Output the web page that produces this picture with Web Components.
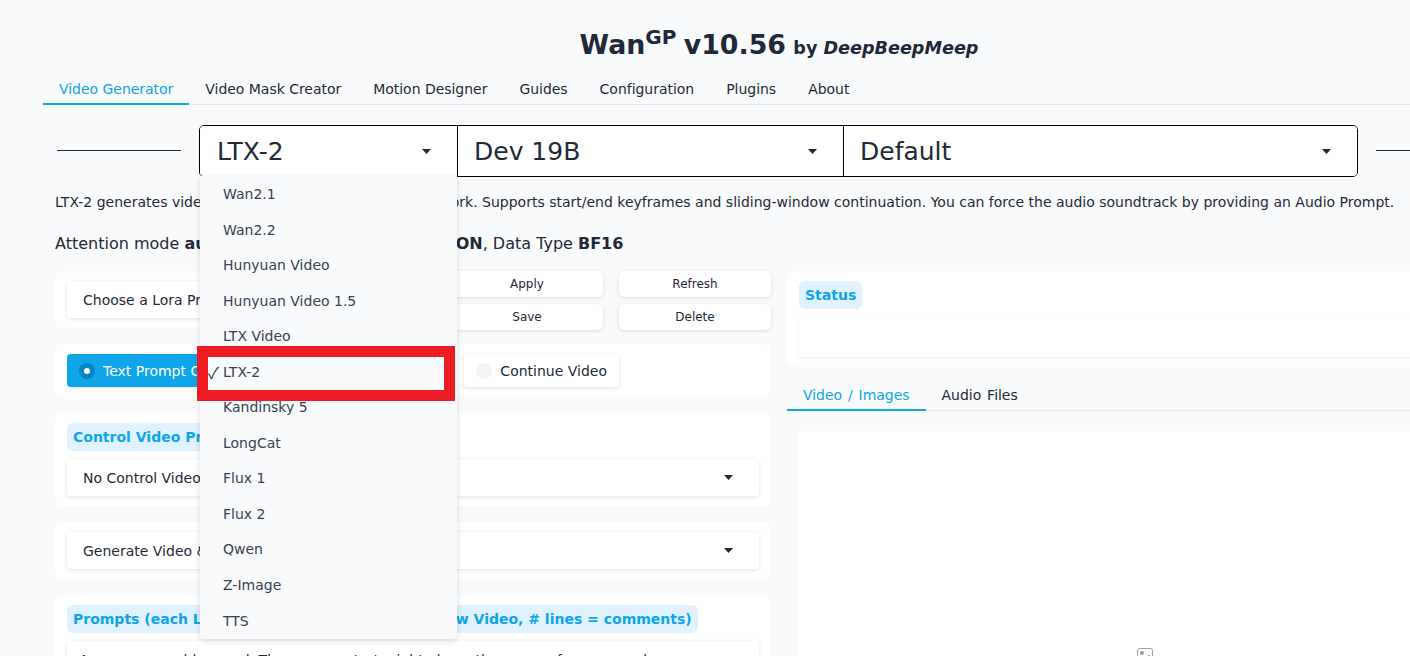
<!DOCTYPE html>
<html>
<head>
<meta charset="utf-8">
<title>WanGP</title>
<style>
  html, body { margin: 0; height: 656px; overflow: hidden; background: #f9fafb; }
  body { font-family: "DejaVu Sans", sans-serif; color: #1f2937; font-size: 14px; }
</style>
</head>
<body>
<wan-app></wan-app>
<script>
function el(name, css, html) {
  customElements.define(name, class extends HTMLElement {
    constructor() {
      super();
      this.attachShadow({ mode: 'open' });
      const body = typeof html === 'function' ? html(this) : html;
      this.shadowRoot.innerHTML = `<style>${css}</style>${body}`;
    }
  });
}

const arrow = `<svg width="9" height="5" viewBox="0 0 9 5"><path d="M0 0h9L4.5 5z" fill="currentColor"/></svg>`;

el('wan-title', `
  :host { display: block; height: 74px; box-sizing: border-box; padding-top: 26px; text-align: center; color: #1f2937; font-weight: 700; font-size: 26.8px; word-spacing: -2px; line-height: 38px; white-space: nowrap; }
  sup { font-size: 20px; line-height: 0; vertical-align: baseline; position: relative; top: -10px; }
  small { font-size: 17.6px; word-spacing: 0; }
`, `Wan<sup>GP</sup> v10.56 <small>by <i>DeepBeepMeep</i></small>`);

el('wan-tabs', `
  :host { display: flex; height: 30px; border-bottom: 1px solid #e5e7eb; font-size: 14px; letter-spacing: -0.03px; color: #1f2937; }
  span { padding: 0 16px; line-height: 30px; height: 29px; box-sizing: border-box; white-space: nowrap; }
  span.on { color: #0ea5e9; border-bottom: 2px solid #0ea5e9; height: 31px; }
`, me => me.getAttribute('items').split('|').map((t, i) => `<span class="${i ? '' : 'on'}">${t}</span>`).join(''));

el('wan-rule', `
  :host { display: block; height: 1px; background: #1f2937; flex: none; width: 124px; }
`, '');

el('wan-segment', `
  :host { display: flex; align-items: center; justify-content: space-between; box-sizing: border-box; height: 100%; padding: 0 26px 0 16px; font-size: 25px; color: #1f2937; position: relative; background: #fff; }
  :host(:not(:last-child)) { border-right: 1px solid #000; }
  :host(:first-child) { border-radius: 4px 0 0 4px; padding-left: 17px; }
  :host(:last-child) { border-radius: 0 4px 4px 0; }
  svg { color: #1f2937; flex: none; }
`, `<slot></slot>${arrow}<slot name="over"></slot>`);

el('wan-models', `
  :host { display: flex; align-items: center; height: 52px; margin: 20px 0 0 14px; }
  .box { display: grid; grid-template-columns: 258px 386px 1fr; width: 1159px; height: 52px; box-sizing: border-box; border: 1px solid #000; border-radius: 5px; margin: 0 18px; }
  wan-rule { position: relative; top: -1px; }
`, `<wan-rule></wan-rule><div class="box"><slot></slot></div><wan-rule></wan-rule>`);

el('wan-menu', `
  :host { position: absolute; left: 0; top: 50px; width: 257px; padding-top: 1px; background: #f9fafb; box-shadow: 0 2px 6px rgba(0,0,0,.14); border-radius: 0 0 4px 4px; z-index: 5; font-size: 14px; color: #374151; }
  div { height: 35.55px; line-height: 35.55px; padding-left: 23px; position: relative; white-space: nowrap; }
  b { position: absolute; left: 8px; font-weight: 400; font-size: 16px; font-family: "Noto Sans CJK JP", "DejaVu Sans", sans-serif; }
  i { position: absolute; left: -3px; right: 2px; top: -9px; bottom: -11px; border: 11px solid #ed1c24; pointer-events: none; }
`, me => me.getAttribute('items').split('|').map(t =>
    t === me.getAttribute('selected') ? `<div><b>✓</b>${t}<i></i></div>` : `<div>${t}</div>`).join(''));

el('wan-card', `
  :host { display: block; background: #fff; border-radius: 8px; padding: 10px 12px; box-sizing: border-box; }
`, `<slot></slot>`);

el('wan-chip', `
  :host { display: table; background: #e0f2fe; color: #0ea5e9; font-weight: 700; font-size: 14px; line-height: 28px; padding: 0 6px; border-radius: 6px; margin-bottom: 8px; white-space: nowrap; }
`, `<slot></slot>`);

el('wan-field', `
  :host { display: flex; align-items: center; justify-content: space-between; height: 37px; box-sizing: border-box; padding: 0 26px 0 16px; background: #fff; border-radius: 4px; box-shadow: 0 1px 4px rgba(0,0,0,.12); font-size: 14px; white-space: nowrap; }
  svg { flex: none; }
`, `<slot></slot>${arrow}`);

el('wan-prompt', `
  :host { display: block; height: 110px; box-sizing: border-box; padding: 9px 12px; background: #fff; border-radius: 4px; box-shadow: 0 1px 4px rgba(0,0,0,.12); font-size: 14px; line-height: 20px; }
`, `<slot></slot>`);

el('wan-btn', `
  :host { display: block; height: 26px; line-height: 26px; text-align: center; background: #fff; border-radius: 6px; box-shadow: 0 1px 4px rgba(0,0,0,.12); font-size: 12px; color: #1f2937; }
`, `<slot></slot>`);

el('wan-radio', `
  :host { display: flex; align-items: center; gap: 8px; height: 33px; box-sizing: border-box; padding: 0 12px; background: #fff; border-radius: 4px; box-shadow: 0 1px 4px rgba(0,0,0,.12); font-size: 14px; white-space: nowrap; }
  :host([on]) { background: #0ea5e9; color: #fff; }
  u { width: 16px; height: 16px; border-radius: 50%; background: #f3f4f6; box-sizing: border-box; flex: none; }
  :host([on]) u { background: #fff; border: 5px solid #0284c7; }
`, `<u></u><slot></slot>`);

el('wan-left', `
  :host { display: flex; flex-direction: column; gap: 16px; width: 716px; flex: none; }
  .top { display: grid; grid-template-columns: 380px 152px 152px; grid-template-rows: 26px 26px; gap: 7px 16px; height: 57px; justify-content: space-between; }
  .lora { grid-row: 1 / 3; height: 57px; }
  .radios { display: flex; justify-content: space-between; padding-right: 140px; }
  .radios wan-radio:first-child { width: 240px; }
  .last { height: 200px; }
`, `
  <div class="top">
    <wan-card class="lora"><wan-field>Choose a Lora Preset</wan-field></wan-card>
    <wan-btn>Apply</wan-btn><wan-btn>Refresh</wan-btn>
    <wan-btn>Save</wan-btn><wan-btn>Delete</wan-btn>
  </div>
  <wan-card><div class="radios"><wan-radio on>Text Prompt Only</wan-radio><wan-radio>Continue Video</wan-radio></div></wan-card>
  <wan-card><wan-chip>Control Video Process</wan-chip><wan-field>No Control Video</wan-field></wan-card>
  <wan-card><wan-field>Generate Video &amp; Audio</wan-field></wan-card>
  <wan-card class="last">
    <wan-chip>Prompts (each Line of Prompt Generates one New Video, # lines = comments)</wan-chip>
    <wan-prompt>A woman on a blue road. The camera starts right above the scene of a wave and</wan-prompt>
  </wan-card>
`);

el('wan-right', `
  :host { display: block; width: 716px; flex: none; }
  .status { height: 96px; margin-bottom: 13px; }
  .empty { height: 40px; background: #fff; border-radius: 4px; box-shadow: 0 1px 3px rgba(0,0,0,.08); }
  wan-tabs { word-spacing: 1.5px; }
  .panel { margin: 20px 12px 0; height: 300px; background: #fff; border-radius: 4px; display: flex; justify-content: center; padding-top: 217px; box-sizing: border-box; }
  svg { color: #9ca3af; }
`, `
  <wan-card class="status"><wan-chip>Status</wan-chip><div class="empty"></div></wan-card>
  <wan-tabs items="Video / Images|Audio Files"></wan-tabs>
  <div class="panel">
    <svg width="16" height="16" viewBox="0 0 16 16" fill="none" stroke="currentColor" stroke-width="1"><rect x=".5" y=".5" width="15" height="15" rx="2"/><circle cx="5" cy="5" r="1.6" fill="currentColor"/><path d="M2 14l6-3 6 3" /><path d="M12 7l-3 3h5z" fill="currentColor"/></svg>
  </div>
`);

el('wan-app', `
  :host { display: block; width: 1472px; margin-left: 43px; }
  .desc { margin: 15px 0 0 12px; line-height: 20px; white-space: nowrap; }
  .mode { margin: 20px 0 0 12px; font-size: 16px; line-height: 24px; white-space: nowrap; }
  .cols { display: flex; gap: 16px; margin: 15px 12px 0; }
`, `
  <wan-title></wan-title>
  <wan-tabs items="Video Generator|Video Mask Creator|Motion Designer|Guides|Configuration|Plugins|About"></wan-tabs>
  <wan-models>
    <wan-segment>LTX-2
      <wan-menu slot="over" selected="LTX-2" items="Wan2.1|Wan2.2|Hunyuan Video|Hunyuan Video 1.5|LTX Video|LTX-2|Kandinsky 5|LongCat|Flux 1|Flux 2|Qwen|Z-Image|TTS"></wan-menu>
    </wan-segment>
    <wan-segment>Dev 19B</wan-segment>
    <wan-segment>Default</wan-segment>
  </wan-models>
  <div class="desc">LTX-2 generates video with native audio in a single network. Supports start/end keyframes and sliding-window continuation. You can force the audio soundtrack by providing an Audio Prompt.</div>
  <div class="mode">Attention mode <b>auto</b>, Compile Transformer Mode <b>ON</b>, Data Type <b>BF16</b></div>
  <div class="cols"><wan-left></wan-left><wan-right></wan-right></div>
`);
</script>
</body>
</html>
